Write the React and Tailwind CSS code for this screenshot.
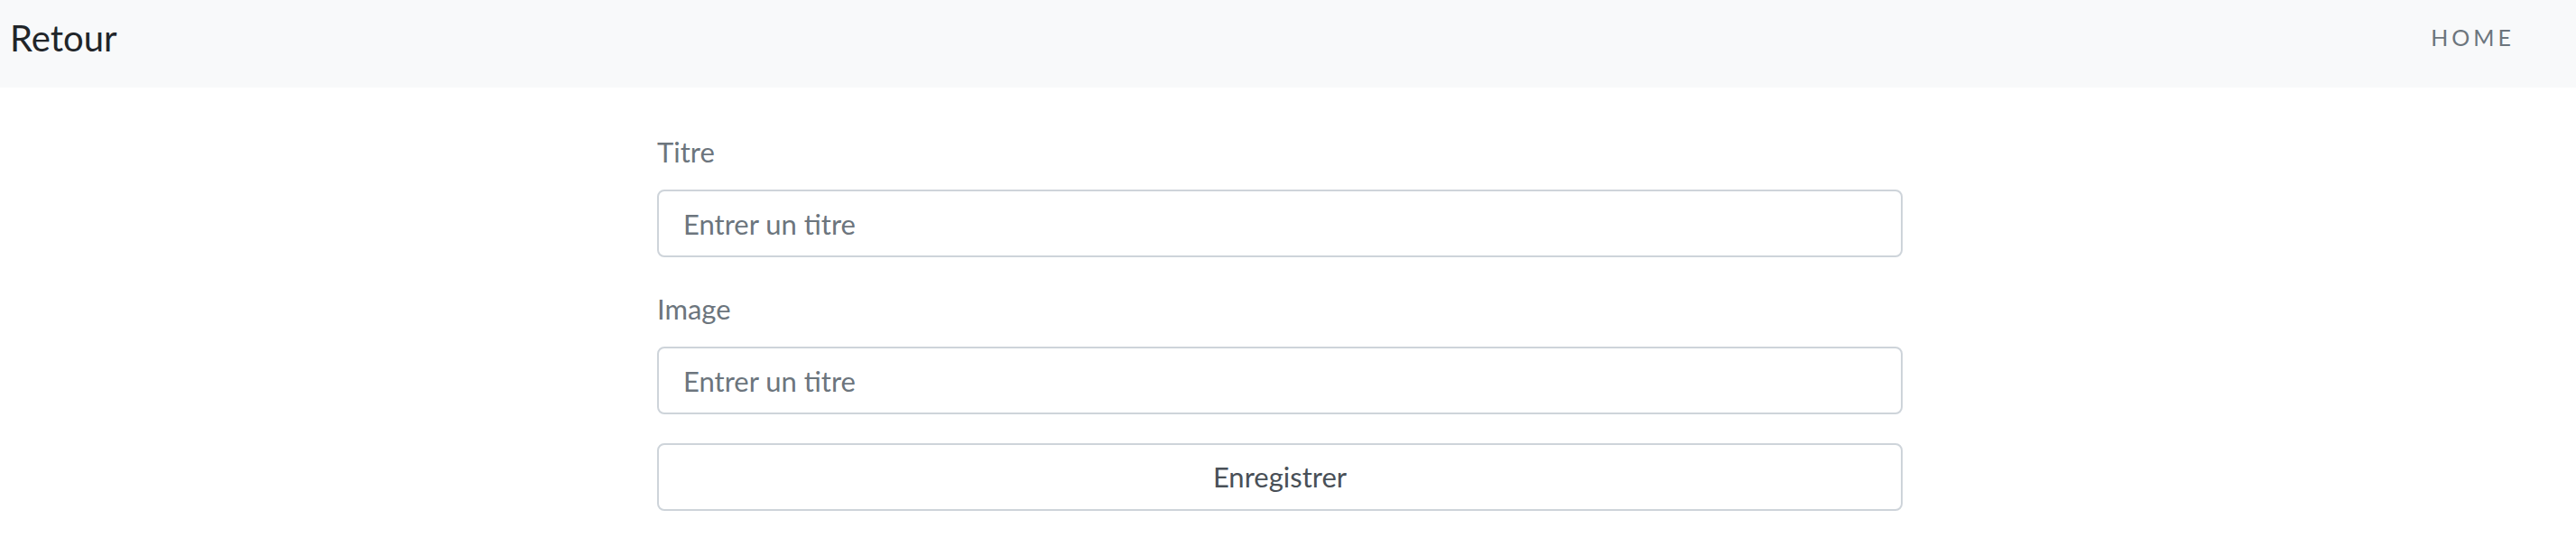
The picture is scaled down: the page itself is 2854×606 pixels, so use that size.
import React from "react"

const font = { fontFamily: '"Lato", "Noto Sans", sans-serif' }

function Field({ label, className }) {
  return (
    <div className={className}>
      <label className="block text-[31px] leading-[46px] text-[#6c757d] mb-[19px]">{label}</label>
      <input
        type="text"
        placeholder="Entrer un titre"
        className="block w-full h-[75px] px-[27px] text-[31px] text-[#495057] placeholder:text-[#6c757d] bg-white border-2 border-[#ced4da] rounded-[8px] outline-none"
      />
    </div>
  )
}

export default function App() {
  return (
    <div className="min-h-screen bg-white" style={font}>
      <nav className="flex items-center justify-between h-[97px] bg-[#f8f9fa] pl-[11px] pr-[68px]">
        <a className="text-[40px] text-[#212529] leading-none pb-[14px]">Retour</a>
        <a className="text-[25px] leading-none tracking-[0.16em] uppercase text-[#6c757d] pb-[14px]">Home</a>
      </nav>

      <main className="pt-[48px] pl-[728px]">
        <form className="w-[1380px]" onSubmit={(e) => e.preventDefault()}>
          <Field label="Titre" />
          <Field label="Image" className="mt-[34px]" />
          <button
            type="submit"
            className="mt-[32px] block w-full h-[75px] text-[31px] text-[#495057] bg-white border-2 border-[#ced4da] rounded-[8px]"
          >
            Enregistrer
          </button>
        </form>
      </main>
    </div>
  )
}
